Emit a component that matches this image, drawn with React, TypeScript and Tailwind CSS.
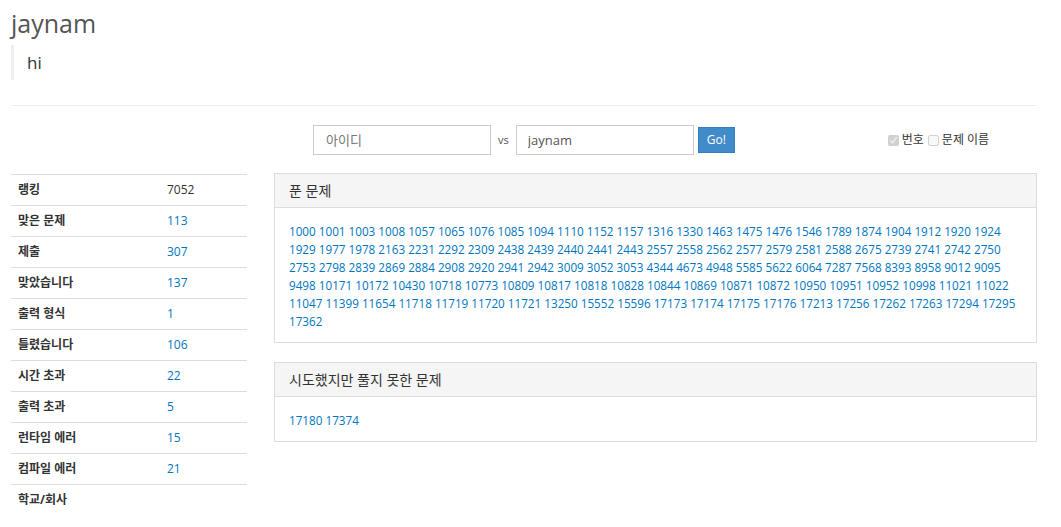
const solved = [
  1000, 1001, 1003, 1008, 1057, 1065, 1076, 1085, 1094, 1110, 1152, 1157, 1316, 1330, 1463, 1475, 1476,
  1546, 1789, 1874, 1904, 1912, 1920, 1924, 1929, 1977, 1978, 2163, 2231, 2292, 2309, 2438, 2439, 2440,
  2441, 2443, 2557, 2558, 2562, 2577, 2579, 2581, 2588, 2675, 2739, 2741, 2742, 2750, 2753, 2798, 2839,
  2869, 2884, 2908, 2920, 2941, 2942, 3009, 3052, 3053, 4344, 4673, 4948, 5585, 5622, 6064, 7287, 7568,
  8393, 8958, 9012, 9095, 9498, 10171, 10172, 10430, 10718, 10773, 10809, 10817, 10818, 10828, 10844,
  10869, 10871, 10872, 10950, 10951, 10952, 10998, 11021, 11022, 11047, 11399, 11654, 11718, 11719,
  11720, 11721, 13250, 15552, 15596, 17173, 17174, 17175, 17176, 17213, 17256, 17262, 17263, 17294,
  17295, 17362,
];

const failed = [17180, 17374];

const stats: { label: string; value: string; link?: boolean }[] = [
  { label: '랭킹', value: '7052' },
  { label: '맞은 문제', value: '113', link: true },
  { label: '제출', value: '307', link: true },
  { label: '맞았습니다', value: '137', link: true },
  { label: '출력 형식', value: '1', link: true },
  { label: '틀렸습니다', value: '106', link: true },
  { label: '시간 초과', value: '22', link: true },
  { label: '출력 초과', value: '5', link: true },
  { label: '런타임 에러', value: '15', link: true },
  { label: '컴파일 에러', value: '21', link: true },
  { label: '학교/회사', value: '' },
];

function Panel({ title, items }: { title: string; items: number[] }) {
  return (
    <div className="mb-[19px] border border-[#dddddd] bg-white">
      <div className="flex h-[34px] items-center border-b border-[#dddddd] bg-[#f5f5f5] px-[14px] text-[14px] text-[#333]">
        {title}
      </div>
      <div className="px-[14px] pt-[14px] pb-[12px] text-[11.7px] leading-[18px]">
        {items.map((n, i) => (
          <span key={n}>
            <a className="text-[#0076c0]">{n}</a>
            {i < items.length - 1 ? ' ' : ''}
          </span>
        ))}
      </div>
    </div>
  );
}

export default function App() {
  return (
    <div
      className="min-h-screen bg-white pr-[24px] pl-[11px] text-[#333]"
      style={{ fontFamily: '"Open Sans", "Noto Sans CJK KR", sans-serif' }}
    >
      <h1 className="pt-[6px] text-[25px] leading-[34px] text-[#555]">jaynam</h1>
      <blockquote className="mt-[5px] ml-0 border-l-[3px] border-[#eeeeee] py-[6px] pl-[13px] text-[17px] leading-[23px]">
        hi
      </blockquote>
      <hr className="mt-[25px] border-[#eeeeee]" />

      <div className="mt-[19px] flex h-[30px] items-center">
        <div className="ml-[302px] flex items-center">
          <input
            className="h-[30px] w-[178px] border border-[#cccccc] px-[12px] text-[13px] text-[#555] placeholder:text-[#777] outline-none"
            placeholder="아이디"
          />
          <span className="mx-[7px] text-[11px] text-[#555]">vs</span>
          <input
            className="h-[30px] w-[178px] border border-[#cccccc] px-[11px] text-[13px] text-[#555] outline-none"
            defaultValue="jaynam"
          />
          <button className="ml-[4px] h-[26px] w-[37px] border border-[#357ebd] bg-[#428bca] text-[12px] text-white">
            Go!
          </button>
        </div>
        <div className="ml-[153px] flex items-center gap-[3px] text-[12px] text-[#333]">
          <input type="checkbox" checked disabled readOnly className="h-[11px] w-[11px]" />
          <span>번호</span>
          <input type="checkbox" disabled readOnly className="ml-[1px] h-[11px] w-[11px]" />
          <span>문제 이름</span>
        </div>
      </div>

      <div className="mt-[18px] flex gap-[27px]">
        <div className="w-[236px] shrink-0 pt-[1px]">
          {stats.map((s) => (
            <div key={s.label} className="flex h-[31px] items-center border-t border-[#dddddd] text-[12px]">
              <div className="w-[156px] pl-[7px] font-bold text-[#333]">{s.label}</div>
              <div className={s.link ? 'text-[#0076c0]' : 'text-[#333]'}>{s.value}</div>
            </div>
          ))}
        </div>
        <div className="flex-1">
          <Panel title="푼 문제" items={solved} />
          <Panel title="시도했지만 풀지 못한 문제" items={failed} />
        </div>
      </div>
    </div>
  );
}
